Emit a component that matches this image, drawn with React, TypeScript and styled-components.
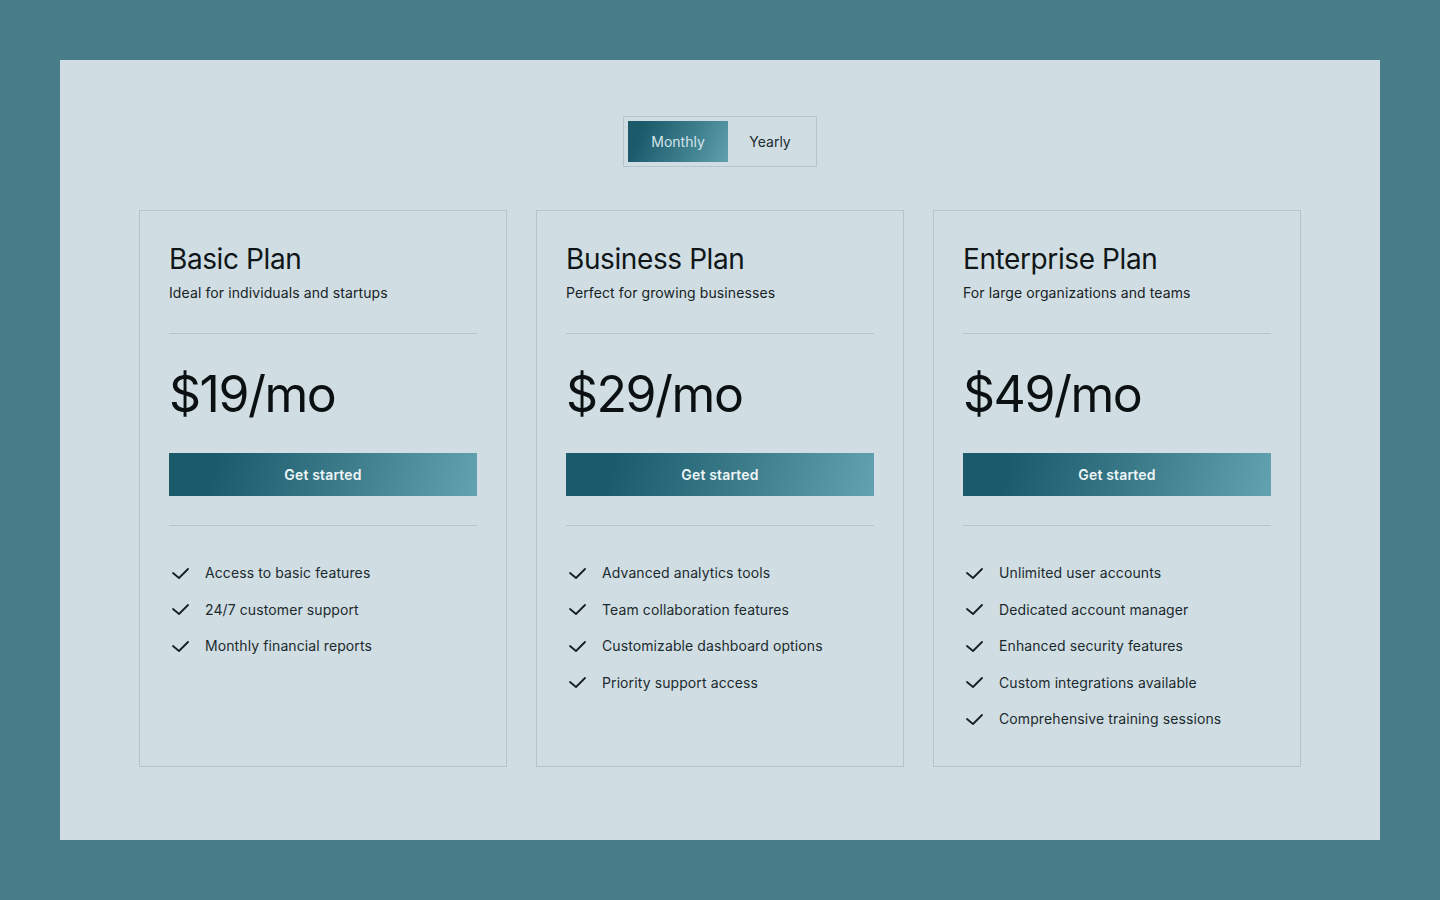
import React, { useState } from "react";
import styled, { createGlobalStyle } from "styled-components";

const Global = createGlobalStyle`
  html, body { margin: 0; padding: 0; }
  body {
    background: #487c89;
    font-family: "Inter", "Noto Sans", "Liberation Sans", sans-serif;
    -webkit-font-smoothing: antialiased;
  }
  * { box-sizing: border-box; }
`;

const Page = styled.div`
  width: 1440px;
  height: 900px;
  padding: 60px;
  background: #487c89;
`;

const Panel = styled.main`
  height: 780px;
  background: #d0dee3;
  padding-top: 56px;
  display: flex;
  flex-direction: column;
  align-items: center;
`;

const Toggle = styled.div`
  display: flex;
  padding: 4px;
  border: 1px solid #b4c6cb;
`;

const ToggleButton = styled.button<{ $active?: boolean }>`
  width: ${(p) => (p.$active ? "100px" : "84px")};
  height: 41px;
  border: none;
  font-family: inherit;
  font-size: 14px;
  letter-spacing: 0;
  cursor: pointer;
  color: ${(p) => (p.$active ? "#d3e4e9" : "#1c2a2e")};
  background: ${(p) =>
    p.$active
      ? "linear-gradient(115deg, #1b5a6b 15%, #3d7e8d 60%, #5f9fae 100%)"
      : "transparent"};
`;

const Grid = styled.div`
  margin-top: 43px;
  width: 1162px;
  display: grid;
  grid-template-columns: repeat(3, 1fr);
  gap: 29px;
`;

const Card = styled.section`
  border: 1px solid #b4c6cb;
  padding: 30px 29px;
  height: 557px;
  display: flex;
  flex-direction: column;
`;

const Title = styled.h2`
  margin: 0;
  font-size: 28px;
  line-height: 36px;
  font-weight: 400;
  color: #101617;
  letter-spacing: -0.4px;
`;

const Subtitle = styled.p`
  margin: 6px 0 30px;
  font-size: 14px;
  line-height: 20px;
  color: #172225;
  letter-spacing: 0.1px;
`;

const Divider = styled.hr`
  margin: 0;
  border: none;
  border-top: 1px solid #b4c6cb;
`;

const Price = styled.div`
  margin-top: 30px;
  font-size: 50px;
  line-height: 60px;
  font-weight: 400;
  color: #0b1112;
  letter-spacing: -1.5px;
`;

const CTA = styled.button`
  margin: 29px 0;
  height: 43px;
  border: none;
  width: 100%;
  font-family: inherit;
  font-size: 14px;
  font-weight: 600;
  color: #eef5f7;
  letter-spacing: 0.15px;
  cursor: pointer;
  background: linear-gradient(105deg, #1b5a6b 15%, #3a7a89 55%, #62a2b1 100%);
`;

const Features = styled.ul`
  list-style: none;
  margin: 37px 0 0;
  padding: 0 0 0 3px;
  display: flex;
  flex-direction: column;
  gap: 16.5px;
`;

const Feature = styled.li`
  display: flex;
  align-items: center;
  gap: 16px;
  font-size: 14px;
  line-height: 20px;
  color: #1c2a2e;
  letter-spacing: 0.1px;
`;

const CheckIcon = () => (
  <svg width="17" height="11" viewBox="0 0 17 11" fill="none">
    <polyline
      points="1,5 7,10 16,1"
      stroke="#152024"
      strokeWidth="1.8"
      strokeLinecap="round"
      strokeLinejoin="round"
    />
  </svg>
);

const plans = [
  {
    name: "Basic Plan",
    desc: "Ideal for individuals and startups",
    price: "$19/mo",
    features: ["Access to basic features", "24/7 customer support", "Monthly financial reports"],
  },
  {
    name: "Business Plan",
    desc: "Perfect for growing businesses",
    price: "$29/mo",
    features: [
      "Advanced analytics tools",
      "Team collaboration features",
      "Customizable dashboard options",
      "Priority support access",
    ],
  },
  {
    name: "Enterprise Plan",
    desc: "For large organizations and teams",
    price: "$49/mo",
    features: [
      "Unlimited user accounts",
      "Dedicated account manager",
      "Enhanced security features",
      "Custom integrations available",
      "Comprehensive training sessions",
    ],
  },
];

export default function App() {
  const [period, setPeriod] = useState<"monthly" | "yearly">("monthly");
  return (
    <Page>
      <Global />
      <Panel>
        <Toggle>
          <ToggleButton $active={period === "monthly"} onClick={() => setPeriod("monthly")}>
            Monthly
          </ToggleButton>
          <ToggleButton $active={period === "yearly"} onClick={() => setPeriod("yearly")}>
            Yearly
          </ToggleButton>
        </Toggle>
        <Grid>
          {plans.map((p) => (
            <Card key={p.name}>
              <Title>{p.name}</Title>
              <Subtitle>{p.desc}</Subtitle>
              <Divider />
              <Price>{p.price}</Price>
              <CTA>Get started</CTA>
              <Divider />
              <Features>
                {p.features.map((f) => (
                  <Feature key={f}>
                    <CheckIcon />
                    {f}
                  </Feature>
                ))}
              </Features>
            </Card>
          ))}
        </Grid>
      </Panel>
    </Page>
  );
}
